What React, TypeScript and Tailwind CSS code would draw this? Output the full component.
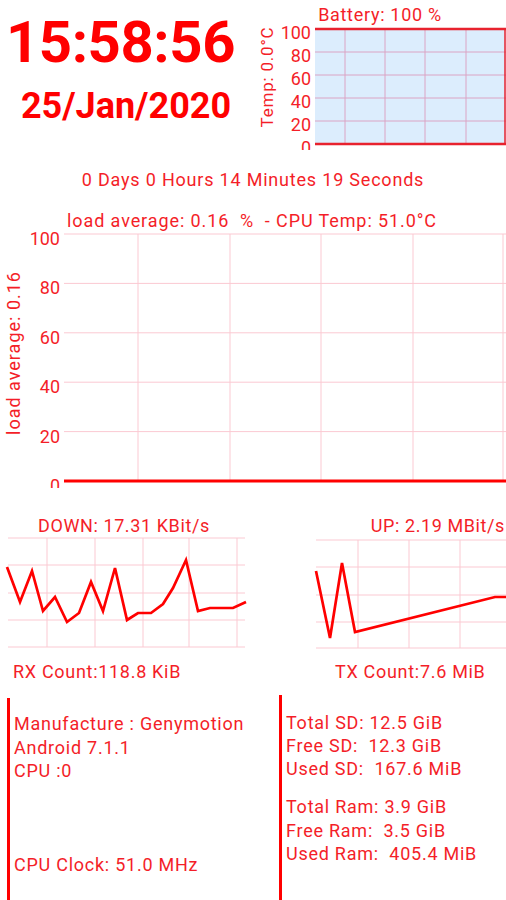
const LINE = "#ff0000";
const LABEL = "#f41e28";
const GRID = "#fbc9d2";

const BatteryChart = () => {
  const hs = [52, 75, 98, 121];
  const vs = [92, 132, 172, 213];
  const labels: [number, number][] = [[100, 29], [80, 52], [60, 75], [40, 98], [20, 121], [0, 144]];
  return (
    <svg width={253} height={150} viewBox="0 0 253 150" className="block">
      <text x={127} y={21} textAnchor="middle" fontSize={18} fill={LABEL} className="tracking-[0.7px]">
        Battery: 100 %
      </text>
      <rect x={62} y={29} width={191} height={115} fill="#dcedfd" />
      {hs.map((y) => (
        <line key={y} x1={62} x2={253} y1={y} y2={y} stroke="#dba4c4" strokeWidth={1} />
      ))}
      {vs.map((x) => (
        <line key={x} x1={x} x2={x} y1={29} y2={144} stroke="#dba4c4" strokeWidth={1} />
      ))}
      <line x1={62} x2={253} y1={29} y2={29} stroke="#e8222e" strokeWidth={2.5} />
      <line x1={62} x2={253} y1={144} y2={144} stroke="#e8222e" strokeWidth={2.5} />
      <line x1={252} x2={252} y1={29} y2={144} stroke="#e8222e" strokeWidth={1.5} />
      {labels.map(([v, y]) => (
        <text key={v} x={58} y={y + 10} textAnchor="end" fontSize={18} fill={LABEL}>{v}</text>
      ))}
      <text
        transform="translate(20 77) rotate(-90)"
        textAnchor="middle"
        fontSize={17}
        fill={LABEL}
        className="tracking-[0.8px]"
      >
        Temp: 0.0°C
      </text>
    </svg>
  );
};

const LoadChart = () => {
  const hs = [29, 78.4, 127.8, 177.2, 226.6];
  const vs = [138, 230, 321, 413, 503];
  const labels: [number, number][] = [[100, 29], [80, 78.4], [60, 127.8], [40, 177.2], [20, 226.6], [0, 276]];
  return (
    <svg width={506} height={283} viewBox="0 0 506 283" className="block">
      <text
        x={252}
        y={22}
        textAnchor="middle"
        fontSize={18}
        fill={LABEL}
        className="whitespace-pre tracking-[0.9px]"
      >
        {"load average: 0.16  %  - CPU Temp: 51.0°C"}
      </text>
      {hs.map((y) => (
        <line key={y} x1={64} x2={506} y1={y} y2={y} stroke={GRID} strokeWidth={1} />
      ))}
      {vs.map((x) => (
        <line key={x} x1={x} x2={x} y1={29} y2={276} stroke={GRID} strokeWidth={1} />
      ))}
      <line x1={64} x2={506} y1={276} y2={276} stroke={LINE} strokeWidth={3} />
      {labels.map(([v, y]) => (
        <text key={v} x={60} y={y + 11} textAnchor="end" fontSize={18} fill={LABEL}>{v}</text>
      ))}
      <text
        transform="translate(20 148) rotate(-90)"
        textAnchor="middle"
        fontSize={18}
        fill={LABEL}
        className="tracking-[1px]"
      >
        load average: 0.16
      </text>
    </svg>
  );
};

const downPts = [
  [7, 62], [20, 97], [32, 66], [43, 106], [55, 92], [67, 117], [79, 108], [91, 77], [103, 106],
  [115, 63], [127, 115], [138, 108], [151, 108], [163, 99], [173, 83], [186, 55], [198, 106],
  [210, 103], [233, 103], [246, 97],
];
const upPts = [[63, 66], [77, 133], [89, 58], [102, 127], [242, 92], [253, 92]];

const NetChart = ({
  title,
  titleX,
  titleAnchor,
  count,
  countX,
  hx,
  hy,
  vs,
  pts,
}: {
  title: string;
  titleX: number;
  titleAnchor: "start" | "end";
  count: string;
  countX: number;
  hx: [number, number];
  hy: number[];
  vs: number[];
  pts: number[][];
}) => (
  <svg width={253} height={180} viewBox="0 0 253 180" className="block">
    <text x={titleX} y={27} textAnchor={titleAnchor} fontSize={18} fill={LABEL} className="tracking-[0.6px]">
      {title}
    </text>
    {hy.map((y) => (
      <line key={y} x1={hx[0]} x2={hx[1]} y1={y} y2={y} stroke={GRID} strokeWidth={1} />
    ))}
    {vs.map((x) => (
      <line key={x} x1={x} x2={x} y1={hy[0]} y2={hy[hy.length - 1]} stroke={GRID} strokeWidth={1} />
    ))}
    <polyline
      points={pts.map((p) => p.join(",")).join(" ")}
      fill="none"
      stroke={LINE}
      strokeWidth={2.7}
      strokeLinejoin="miter"
    />
    <text x={countX} y={173} fontSize={18} fill={LABEL} className="tracking-[0.7px]">{count}</text>
  </svg>
);

export default function App() {
  return (
    <div className="w-[506px] h-[900px] overflow-hidden bg-white font-[Roboto,sans-serif] text-[#ff0000]">
      <div className="flex h-[150px] overflow-hidden">
        <div className="w-[253px] flex flex-col items-center pr-[12px]">
          <div className="pt-[13px] text-[58px] leading-none font-bold tracking-[-0.4px]">15:58:56</div>
          <div className="mt-[17px] ml-[11px] text-[36px] leading-none font-bold">25/Jan/2020</div>
        </div>
        <BatteryChart />
      </div>

      <div className="mt-[18px] text-center text-[18px] leading-[24px] tracking-[0.8px] text-[#f41e28]">
        0 Days 0 Hours 14 Minutes 19 Seconds
      </div>

      <div className="mt-[13px]">
        <LoadChart />
      </div>

      <div className="mt-[17px] flex h-[180px]">
        <NetChart
          title="DOWN: 17.31 KBit/s"
          titleX={38}
          titleAnchor="start"
          count="RX Count:118.8 KiB"
          countX={13}
          hx={[8, 245]}
          hy={[33, 60, 88, 115, 142]}
          vs={[47, 95, 143, 189, 237]}
          pts={downPts}
        />
        <NetChart
          title="UP: 2.19 MBit/s"
          titleX={252}
          titleAnchor="end"
          count="TX Count:7.6 MiB"
          countX={82}
          hx={[63, 253]}
          hy={[35, 62, 90, 117, 143]}
          vs={[105, 156, 207]}
          pts={upPts}
        />
      </div>

      <div className="flex h-[215px] text-[18px] tracking-[0.75px] text-[#f41e28]">
        <div className="w-[253px] pl-[7px]">
          <div className="mt-[13px] h-full border-l-[3px] border-[#ff0000] pl-[4px] pt-[14px] leading-[23.5px]">
            <div>Manufacture : Genymotion</div>
            <div>Android 7.1.1</div>
            <div>CPU :0</div>
            <div className="h-[70.5px]" />
            <div>CPU Clock: 51.0 MHz</div>
          </div>
        </div>
        <div className="flex-1 pl-[26px]">
          <div className="mt-[10px] h-full border-l-[3px] border-[#ff0000] pl-[4px] pt-[16px] whitespace-pre">
            <div className="leading-[23px]">
              <div>Total SD: 12.5 GiB</div>
              <div>Free SD:  12.3 GiB</div>
              <div>Used SD:  167.6 MiB</div>
            </div>
            <div className="mt-[15px] leading-[23.5px]">
              <div>Total Ram: 3.9 GiB</div>
              <div>Free Ram:  3.5 GiB</div>
              <div>Used Ram:  405.4 MiB</div>
            </div>
          </div>
        </div>
      </div>
    </div>
  );
}
